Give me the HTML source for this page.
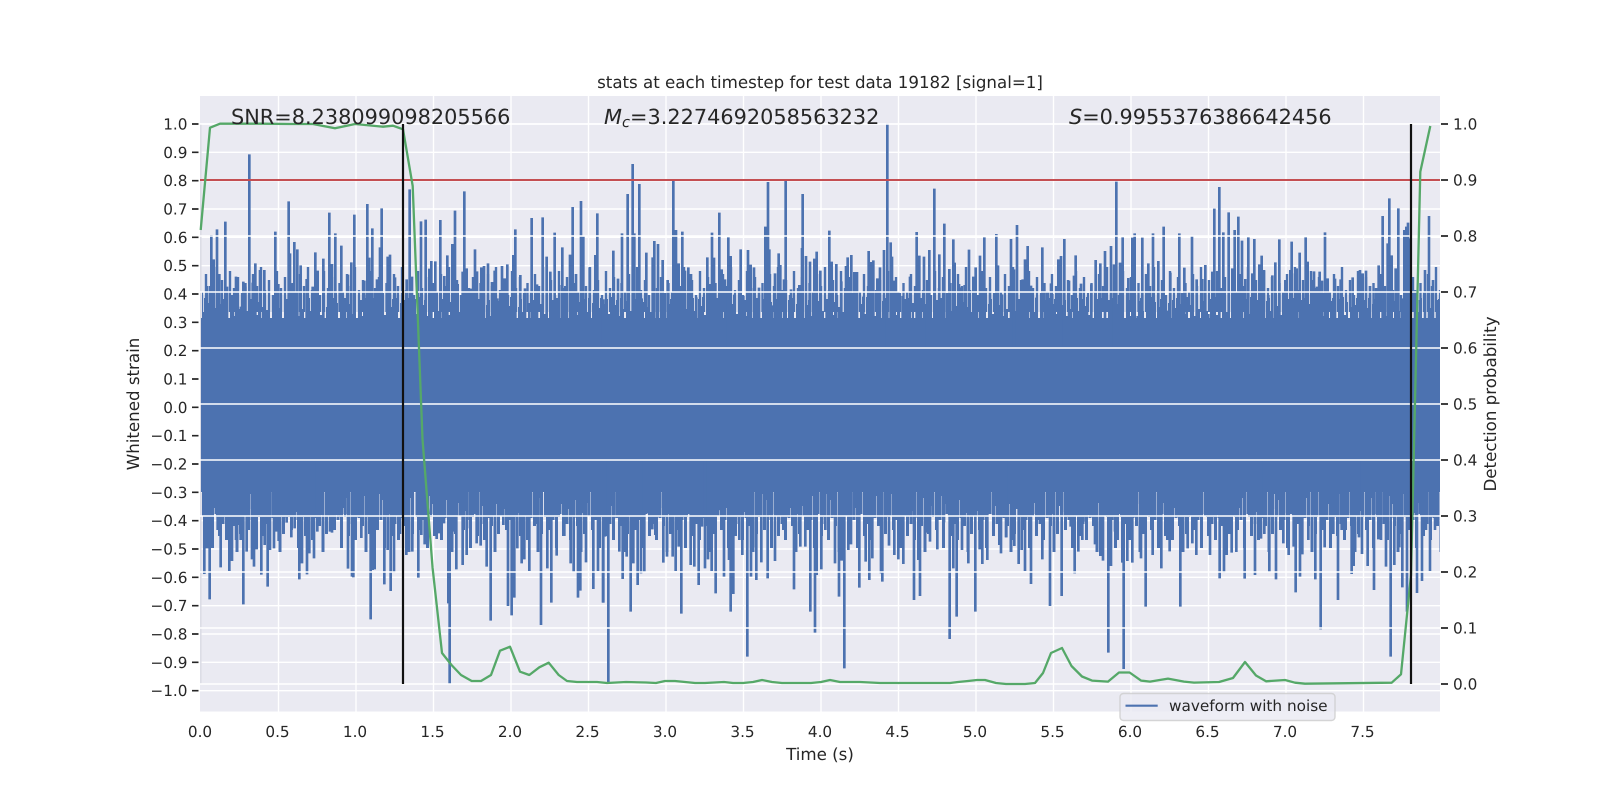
<!DOCTYPE html>
<html>
<head>
<meta charset="utf-8">
<title>stats at each timestep</title>
<style>
html,body{margin:0;padding:0;background:#fff;width:1600px;height:800px;overflow:hidden}
svg{display:block}
text{font-family:"DejaVu Sans","Liberation Sans",sans-serif;fill:#262626;text-rendering:geometricPrecision}
.t{font-size:15.28px}
.l{font-size:16.67px}
.b{font-size:20.83px}
</style>
</head>
<body>
<svg width="1600" height="800" viewBox="0 0 1600 800" xmlns="http://www.w3.org/2000/svg">
<defs>
<pattern id="pt" patternUnits="userSpaceOnUse" x="200" y="296" width="64" height="40">
<path fill="none" stroke="#4c72b0" stroke-width="2" d="M1 3V40M3 16V40M5 2V40M7 22V40M9 7V40M11 28V40M13 4V40M15 12V40M17 2V40M19 26V40M21 8V40M23 3V40M25 18V40M27 1V40M29 30V40M31 9V40M33 4V40M35 20V40M37 2V40M39 13V40M41 27V40M43 5V40M45 2V40M47 15V40M49 24V40M51 3V40M53 10V40M55 1V40M57 19V40M59 6V40M61 29V40M63 11V40"/>
</pattern>
<pattern id="p2" patternUnits="userSpaceOnUse" x="200" y="262" width="47" height="50">
<path fill="none" stroke="#4c72b0" stroke-width="2.4" d="M2 30V50M6 12V50M10 24V50M14 5V50M18 28V50M22 18V50M26 33V50M30 9V50M34 26V50M38 15V50M42 31V50M45.5 21V50"/>
</pattern>
<pattern id="pb" patternUnits="userSpaceOnUse" x="200" y="478" width="64" height="42">
<path fill="none" stroke="#4c72b0" stroke-width="2.2" d="M1 0V38M3 0V25M5 0V38M7 0V14M9 0V33M11 0V39M13 0V8M15 0V30M17 0V39M19 0V20M21 0V36M23 0V12M25 0V39M27 0V28M29 0V39M31 0V6M33 0V34M35 0V39M37 0V18M39 0V39M41 0V26M43 0V10M45 0V38M47 0V39M49 0V31M51 0V16M53 0V39M55 0V22M57 0V37M59 0V39M61 0V4M63 0V35"/>
</pattern>
<pattern id="p3" patternUnits="userSpaceOnUse" x="200" y="490" width="43" height="75">
<path fill="none" stroke="#4c72b0" stroke-width="3" d="M2 0V26M5.5 0V40M9 0V30M12.5 0V58M16 0V24M19.5 0V46M23 0V34M26.5 0V50M30 0V28M33.5 0V36M37 0V62M40.5 0V44"/>
</pattern>
</defs>

<!-- axes background -->
<rect x="200" y="96" width="1240" height="615.5" fill="#eaeaf2"/>

<!-- left grid -->
<g stroke="#fff" stroke-width="1.39" fill="none">
<path d="M200 124H1440M200 152.3H1440M200 180.7H1440M200 209H1440M200 237.3H1440M200 265.7H1440M200 294H1440M200 322.3H1440M200 350.7H1440M200 379H1440M200 407.3H1440M200 435.7H1440M200 464H1440M200 492.3H1440M200 520.7H1440M200 549H1440M200 577.3H1440M200 605.7H1440M200 634H1440M200 662.3H1440M200 690.7H1440"/>
<path d="M278.5 96V711.5M356 96V711.5M433.5 96V711.5M511 96V711.5M588.5 96V711.5M666 96V711.5M743.5 96V711.5M821 96V711.5M898.5 96V711.5M976 96V711.5M1053.5 96V711.5M1131 96V711.5M1208.5 96V711.5M1286 96V711.5M1363.5 96V711.5"/>
</g>

<!-- waveform -->
<path d="M200.8 124V684" stroke="#dcdde6" stroke-width="1.6" fill="none"/>
<rect x="202" y="262" width="1238" height="50" fill="url(#p2)"/>
<rect x="202" y="296" width="1238" height="40" fill="url(#pt)"/>
<rect x="202" y="478" width="1238" height="42" fill="url(#pb)"/>
<rect x="202" y="490" width="1238" height="75" fill="url(#p3)"/>
<rect x="201" y="318" width="1239" height="174" fill="#4c72b0"/>

<g fill="none" stroke="#4c72b0" stroke-width="8">
<path transform="translate(196 130) scale(.33333)" d="M33 468V650M46 315V650M53 388V650M63 298V650M70 432V650M88 275V650M93 470V650M108 495V650M120 440V650M135 530V650M142 455V650M148 470V650M160 73V650M170 458V650M178 400V650M192 420V650M205 420V650M212 540V650M238 305V650M247 462V650M278 214V650M282 370V650M290 460V650M295 336V650M304 358V650M314 406V650M332 447V650M350 470V650M358 367V650M365 422V650M382 386V650M400 248V650M408 402V650M418 310V650M436 347V650M456 434V650M466 397V650M475 254V650M505 452V650M514 222V650M520 383V650M529 295V650M543 448V650M552 352V650M557 235V650M575 380V650M582 374V650M597 442V650M632 448V650M641 178V650M648 440V650M675 274V650M689 269V650M700 416V650M706 393V650M718 394V650M733 270V650M745 438V650M754 376V650M769 342V650M777 242V650M785 462V650M805 184V650M800 425V650M812 415V650M826 476V650M837 358V650M843 424V650M856 412V650M864 408V650M876 400V650M888 456V650M896 422V650M904 505V650M918 408V650M926 445V650M934 403V650M952 375V650M958 298V650M973 435V650M987 475V650M1007 264V650M1023 463V650M1040 262V650M1052 380V650M1063 425V650M1076 308V650M1090 465V650M1099 352V650M1108 468V650M1122 374V650M1130 231V650M1140 432V650M1155 213V650M1162 320V650M1181 412V650M1198 375V650M1204 250V650M1222 508V650"/>
<path transform="translate(600 120) scale(.33333)" d="M10 538V690M40 392V690M54 476V690M66 340V690M83 222V690M98 132V690M103 340V690M118 192V690M125 535V690M139 398V690M158 412V690M163 363V690M174 372V690M188 420V690M203 480V690M220 183V690M228 330V690M236 430V690M247 335V690M255 452V690M265 442V690M273 462V690M289 532V690M302 583V690M322 412V690M328 492V690M336 338V690M342 413V690M358 278V690M365 448V690M375 478V690M385 352V690M392 408V690M403 524V690M422 388V690M430 528V690M444 390V690M452 434V690M462 442V690M477 503V690M496 320V690M504 186V690M508 388V690M516 556V690M525 460V690M536 400V690M541 435V690M557 183V690M552 478V690M573 508V690M598 495V690M606 384V690M608 222V690M618 408V690M630 425V690M643 416V690M650 395V690M661 452V690M680 562V690M688 332V690M695 425V690M709 432V690M724 484V690M738 438V690M743 412V690M754 405V690M763 456V690M771 456V690M790 530V690M806 393V690M812 426V690M820 421V690M832 475V690M840 442V690M852 390V690M862 10V690M872 367V690M876 410V690M883 482V690M895 515V690M908 528V690M930 470V690M950 336V690M958 407V690M972 410V690M982 510V690M988 390V690M1003 206V690M1018 403V690M1033 311V690M1048 447V690M1060 358V690M1064 428V690M1077 492V690M1082 502V690M1094 495V690M1107 389V690M1120 470V690M1127 442V690M1140 407V690M1153 352V690M1170 515V690M1189 342V690M1194 436V690M1206 523V690"/>
<path transform="translate(1005 130) scale(.33333)" d="M18 327V650M27 418V650M36 285V650M53 448V650M60 388V650M68 348V650M78 467V650M94 503V650M112 352V650M126 484V650M138 460V650M142 492V650M160 388V650M168 378V650M178 327V650M192 452V650M207 437V650M212 376V650M228 461V650M246 538V650M259 463V650M272 390V650M286 400V650M300 363V650M318 348V650M327 403V650M334 155V650M345 398V650M353 322V650M370 444V650M382 323V650M389 310V650M398 558V650M412 323V650M430 400V650M444 310V650M460 393V650M476 290V650M487 542V650M496 428V650M510 553V650M523 310V650M538 413V650M561 318V650M575 448V650M592 447V650M601 405V650M610 552V650M622 425V650M628 236V650M643 171V650M655 307V650M671 247V650M682 415V650M689 300V650M700 260V650M711 332V650M721 447V650M730 322V650M742 430V650M748 327V650M763 403V650M770 377V650M777 420V650M790 495V650M802 436V650M811 397V650M823 328V650M841 450V650M856 420V650M860 335V650M870 430V650M875 415V650M884 368V650M902 322V650M908 395V650M919 450V650M927 424V650M936 470V650M944 425V650M951 452V650M960 307V650M968 445V650M990 446V650M1007 448V650M1043 442V650M1053 525V650M1065 420V650M1073 430V650M1083 422V650M1095 468V650M1113 474V650M1121 406V650M1133 258V650M1148 340V650M1153 205V650M1160 376V650M1172 415V650M1180 235V650M1190 505V650M1198 300V650M1204 290V650M1209 278V650M1214 325V650"/>
<path transform="translate(196 460) scale(.33333)" d="M25 0V342M33 0V265M41 0V418M65 0V210M74 0V322M92 0V200M100 0V333M108 0V303M120 0V240M127 0V195M134 0V240M142 0V433M152 0V275M158 0V195M168 0V298M174 0V320M182 0V268M196 0V344M206 0V255M215 0V380M222 0V270M234 0V265M240 0V215M248 0V243M266 0V172M272 0V188M286 0V232M296 0V205M310 0V358M318 0V310M333 0V343M340 0V280M354 0V295M364 0V215M402 0V215M408 0V218M424 0V165M456 0V326M468 0V350M472 0V352M484 0V152M496 0V234M510 0V185M524 0V478M530 0V330M536 0V328M545 0V160M565 0V373M575 0V270M584 0V393M594 0V338M603 0V165M612 0V222M631 0V285M649 0V275M667 0V353M676 0V225M686 0V253M722 0V237M728 0V220M744 0V190M757 0V430M761 0V672M773 0V215M781 0V328M800 0V315M812 0V285M822 0V205M842 0V250M854 0V257M872 0V320M884 0V482M895 0V170M922 0V195M936 0V438M947 0V466M955 0V413M964 0V265M977 0V310M985 0V298M1000 0V333M1018 0V192M1035 0V495M1054 0V325M1066 0V428M1082 0V287M1105 0V228M1124 0V310M1133 0V335M1146 0V413M1153 0V392M1170 0V307M1192 0V387M1206 0V333M1222 0V428"/>
<path transform="translate(600 460) scale(.33333)" d="M9 0V428M15 0V230M25 0V672M42 0V175M58 0V275M68 0V357M80 0V290M92 0V455M100 0V310M113 0V375M123 0V340M133 0V335M157 0V208M166 0V225M190 0V308M201 0V290M218 0V290M227 0V333M236 0V260M244 0V461M272 0V315M283 0V320M296 0V375M306 0V200M315 0V325M324 0V298M335 0V333M347 0V400M357 0V150M372 0V350M387 0V300M392 0V455M400 0V402M418 0V240M427 0V285M442 0V590M453 0V350M460 0V262M469 0V360M484 0V307M503 0V355M525 0V303M550 0V210M582 0V388M601 0V260M616 0V260M631 0V455M645 0V518M650 0V345M664 0V328M676 0V210M705 0V310M717 0V410M725 0V302M733 0V625M745 0V270M753 0V253M778 0V383M797 0V305M808 0V360M817 0V295M843 0V340M847 0V365M867 0V257M883 0V285M895 0V298M910 0V312M925 0V165M942 0V420M955 0V300M960 0V408M980 0V218M990 0V245M1012 0V268M1032 0V187M1049 0V537M1060 0V325M1070 0V470M1086 0V270M1105 0V310M1126 0V455M1139 0V268M1147 0V312M1162 0V300M1180 0V217M1198 0V255M1203 0V280M1219 0V232"/>
<path transform="translate(1005 460) scale(.33333)" d="M3 0V232M20 0V240M28 0V258M41 0V312M50 0V270M60 0V333M78 0V372M100 0V180M112 0V298M135 0V438M170 0V408M197 0V200M209 0V340M220 0V275M232 0V240M243 0V185M270 0V253M286 0V288M294 0V302M310 0V578M318 0V318M330 0V215M338 0V240M352 0V308M356 0V627M367 0V303M382 0V308M408 0V295M422 0V440M443 0V285M469 0V325M487 0V240M494 0V274M526 0V440M548 0V265M562 0V250M574 0V285M590 0V210M615 0V285M644 0V355M657 0V338M665 0V285M680 0V278M694 0V276M719 0V356M750 0V345M768 0V236M778 0V222M793 0V335M813 0V358M835 0V250M851 0V285M866 0V260M872 0V397M885 0V350M892 0V283M910 0V240M931 0V358M947 0V508M959 0V262M985 0V222M999 0V420M1010 0V210M1022 0V210M1040 0V342M1046 0V318M1062 0V232M1071 0V282M1088 0V318M1107 0V390M1120 0V238M1128 0V240M1143 0V320M1157 0V590M1168 0V315M1183 0V262M1192 0V382M1206 0V455"/>
<path stroke-width="2.6" d="M1415 290V340M1420 300V340M1425 270V340M1429 216V340M1433 280V340M1437 300V340M1417 470V593M1422 470V581M1426 470V530M1430 470V571M1435 470V530"/>
</g>

<!-- legend -->
<rect x="1120" y="693.5" width="215" height="27" rx="3.5" ry="3.5" fill="#eaeaf2" fill-opacity=".8" stroke="#ccc" stroke-opacity=".8" stroke-width="1.39"/>
<path d="M1125.5 705.7H1157.7" stroke="#4c72b0" stroke-width="2.08" fill="none"/>
<text class="t" x="1169" y="711">waveform with noise</text>

<!-- right grid (on top of waveform) -->
<path d="M200 124H1440M200 236H1440M200 292H1440M200 348H1440M200 404H1440M200 460H1440M200 516H1440M200 572H1440M200 628H1440M200 684H1440" stroke="#fff" stroke-width="1.39" fill="none"/>

<!-- red threshold -->
<path d="M200 180H1440" stroke="#c44e52" stroke-width="2.08" fill="none"/>

<!-- green probability -->
<polyline fill="none" stroke="#55a868" stroke-width="2.3" stroke-linejoin="round" points="200.7,230 210,127.7 220,123.7 240,123.7 260,123.7 290,124 313,124 335,128.3 355,124 383,126.7 393,125.7 403,129.3 412.7,186 422.5,439 432.6,568 442,653 451.5,665 461,675 471.7,681 481,681 491,675 500,650.7 510,646.7 520,671.7 529.3,675 539.3,667.3 548.7,662.7 558.7,675 567,681 577,682 597,682 607,683 626,682 646,682.5 656,683 665,681 675,681 685,682 695,683 705,683 724,682 733,683 743,683 753,682 762,680 772,682 782,683 801,683 811,683 821,682 830,680 840,682 850,682 860,682 880,683 900,683 929,683 950,683 958,682 968,681 977,680 985,680 996,683 1006,684 1025,684 1035,683 1043,673 1051,653 1062,648 1071.5,666 1082,676.5 1092,680.6 1108,681.6 1119,672.5 1129.6,672.5 1141,680.6 1150,681.6 1168,678.6 1184,681.6 1194,682.6 1219,682 1233,678 1245,662 1256,675.5 1266,681.3 1285,680 1295,682.7 1305,683.7 1391.7,682.7 1401,674.3 1411,575 1420.3,171.7 1430.3,126"/>

<!-- black markers -->
<path d="M403 124V684M1411 124V684" stroke="#111" stroke-width="2.2" fill="none"/>

<!-- tick marks -->
<path d="M192 124H198.5M192 152.3H198.5M192 180.7H198.5M192 209H198.5M192 237.3H198.5M192 265.7H198.5M192 294H198.5M192 322.3H198.5M192 350.7H198.5M192 379H198.5M192 407.3H198.5M192 435.7H198.5M192 464H198.5M192 492.3H198.5M192 520.7H198.5M192 549H198.5M192 577.3H198.5M192 605.7H198.5M192 634H198.5M192 662.3H198.5M192 690.7H198.5" stroke="#262626" stroke-width="1.67" fill="none"/>
<path d="M1441 124H1448M1441 180H1448M1441 236H1448M1441 292H1448M1441 348H1448M1441 404H1448M1441 460H1448M1441 516H1448M1441 572H1448M1441 628H1448M1441 684H1448" stroke="#262626" stroke-width="1.67" fill="none"/>

<!-- left tick labels -->
<g class="t" text-anchor="end">
<text class="t" x="187.5" y="129.5">1.0</text>
<text class="t" x="187.5" y="157.8">0.9</text>
<text class="t" x="187.5" y="186.2">0.8</text>
<text class="t" x="187.5" y="214.5">0.7</text>
<text class="t" x="187.5" y="242.8">0.6</text>
<text class="t" x="187.5" y="271.2">0.5</text>
<text class="t" x="187.5" y="299.5">0.4</text>
<text class="t" x="187.5" y="327.8">0.3</text>
<text class="t" x="187.5" y="356.2">0.2</text>
<text class="t" x="187.5" y="384.5">0.1</text>
<text class="t" x="187.5" y="412.8">0.0</text>
<text class="t" x="187.5" y="441.2">−0.1</text>
<text class="t" x="187.5" y="469.5">−0.2</text>
<text class="t" x="187.5" y="497.8">−0.3</text>
<text class="t" x="187.5" y="526.2">−0.4</text>
<text class="t" x="187.5" y="554.5">−0.5</text>
<text class="t" x="187.5" y="582.8">−0.6</text>
<text class="t" x="187.5" y="611.2">−0.7</text>
<text class="t" x="187.5" y="639.5">−0.8</text>
<text class="t" x="187.5" y="667.8">−0.9</text>
<text class="t" x="187.5" y="696.2">−1.0</text>
</g>

<!-- right tick labels -->
<text class="t" x="1453" y="129.5">1.0</text>
<text class="t" x="1453" y="185.5">0.9</text>
<text class="t" x="1453" y="241.5">0.8</text>
<text class="t" x="1453" y="297.5">0.7</text>
<text class="t" x="1453" y="353.5">0.6</text>
<text class="t" x="1453" y="409.5">0.5</text>
<text class="t" x="1453" y="465.5">0.4</text>
<text class="t" x="1453" y="521.5">0.3</text>
<text class="t" x="1453" y="577.5">0.2</text>
<text class="t" x="1453" y="633.5">0.1</text>
<text class="t" x="1453" y="689.5">0.0</text>

<!-- x tick labels -->
<g text-anchor="middle">
<text class="t" x="200" y="737">0.0</text>
<text class="t" x="277.5" y="737">0.5</text>
<text class="t" x="355" y="737">1.0</text>
<text class="t" x="432.5" y="737">1.5</text>
<text class="t" x="510" y="737">2.0</text>
<text class="t" x="587.5" y="737">2.5</text>
<text class="t" x="665" y="737">3.0</text>
<text class="t" x="742.5" y="737">3.5</text>
<text class="t" x="820" y="737">4.0</text>
<text class="t" x="897.5" y="737">4.5</text>
<text class="t" x="975" y="737">5.0</text>
<text class="t" x="1052.5" y="737">5.5</text>
<text class="t" x="1130" y="737">6.0</text>
<text class="t" x="1207.5" y="737">6.5</text>
<text class="t" x="1285" y="737">7.0</text>
<text class="t" x="1362.5" y="737">7.5</text>
</g>

<!-- axis labels & title -->
<text class="l" x="820" y="88" text-anchor="middle">stats at each timestep for test data 19182 [signal=1]</text>
<text class="l" x="820" y="760" text-anchor="middle">Time (s)</text>
<text class="l" transform="translate(139 404) rotate(-90)" text-anchor="middle">Whitened strain</text>
<text class="l" transform="translate(1496 404) rotate(-90)" text-anchor="middle">Detection probability</text>

<!-- big stats -->
<text class="b" x="231" y="124">SNR=8.238099098205566</text>
<text class="b" x="604" y="124"><tspan font-style="italic">M</tspan><tspan font-style="italic" font-size="14.6" dy="3">c</tspan><tspan dy="-3">=3.2274692058563232</tspan></text>
<text class="b" x="1069" y="124"><tspan font-style="italic">S</tspan>=0.9955376386642456</text>
</svg>
</body>
</html>
